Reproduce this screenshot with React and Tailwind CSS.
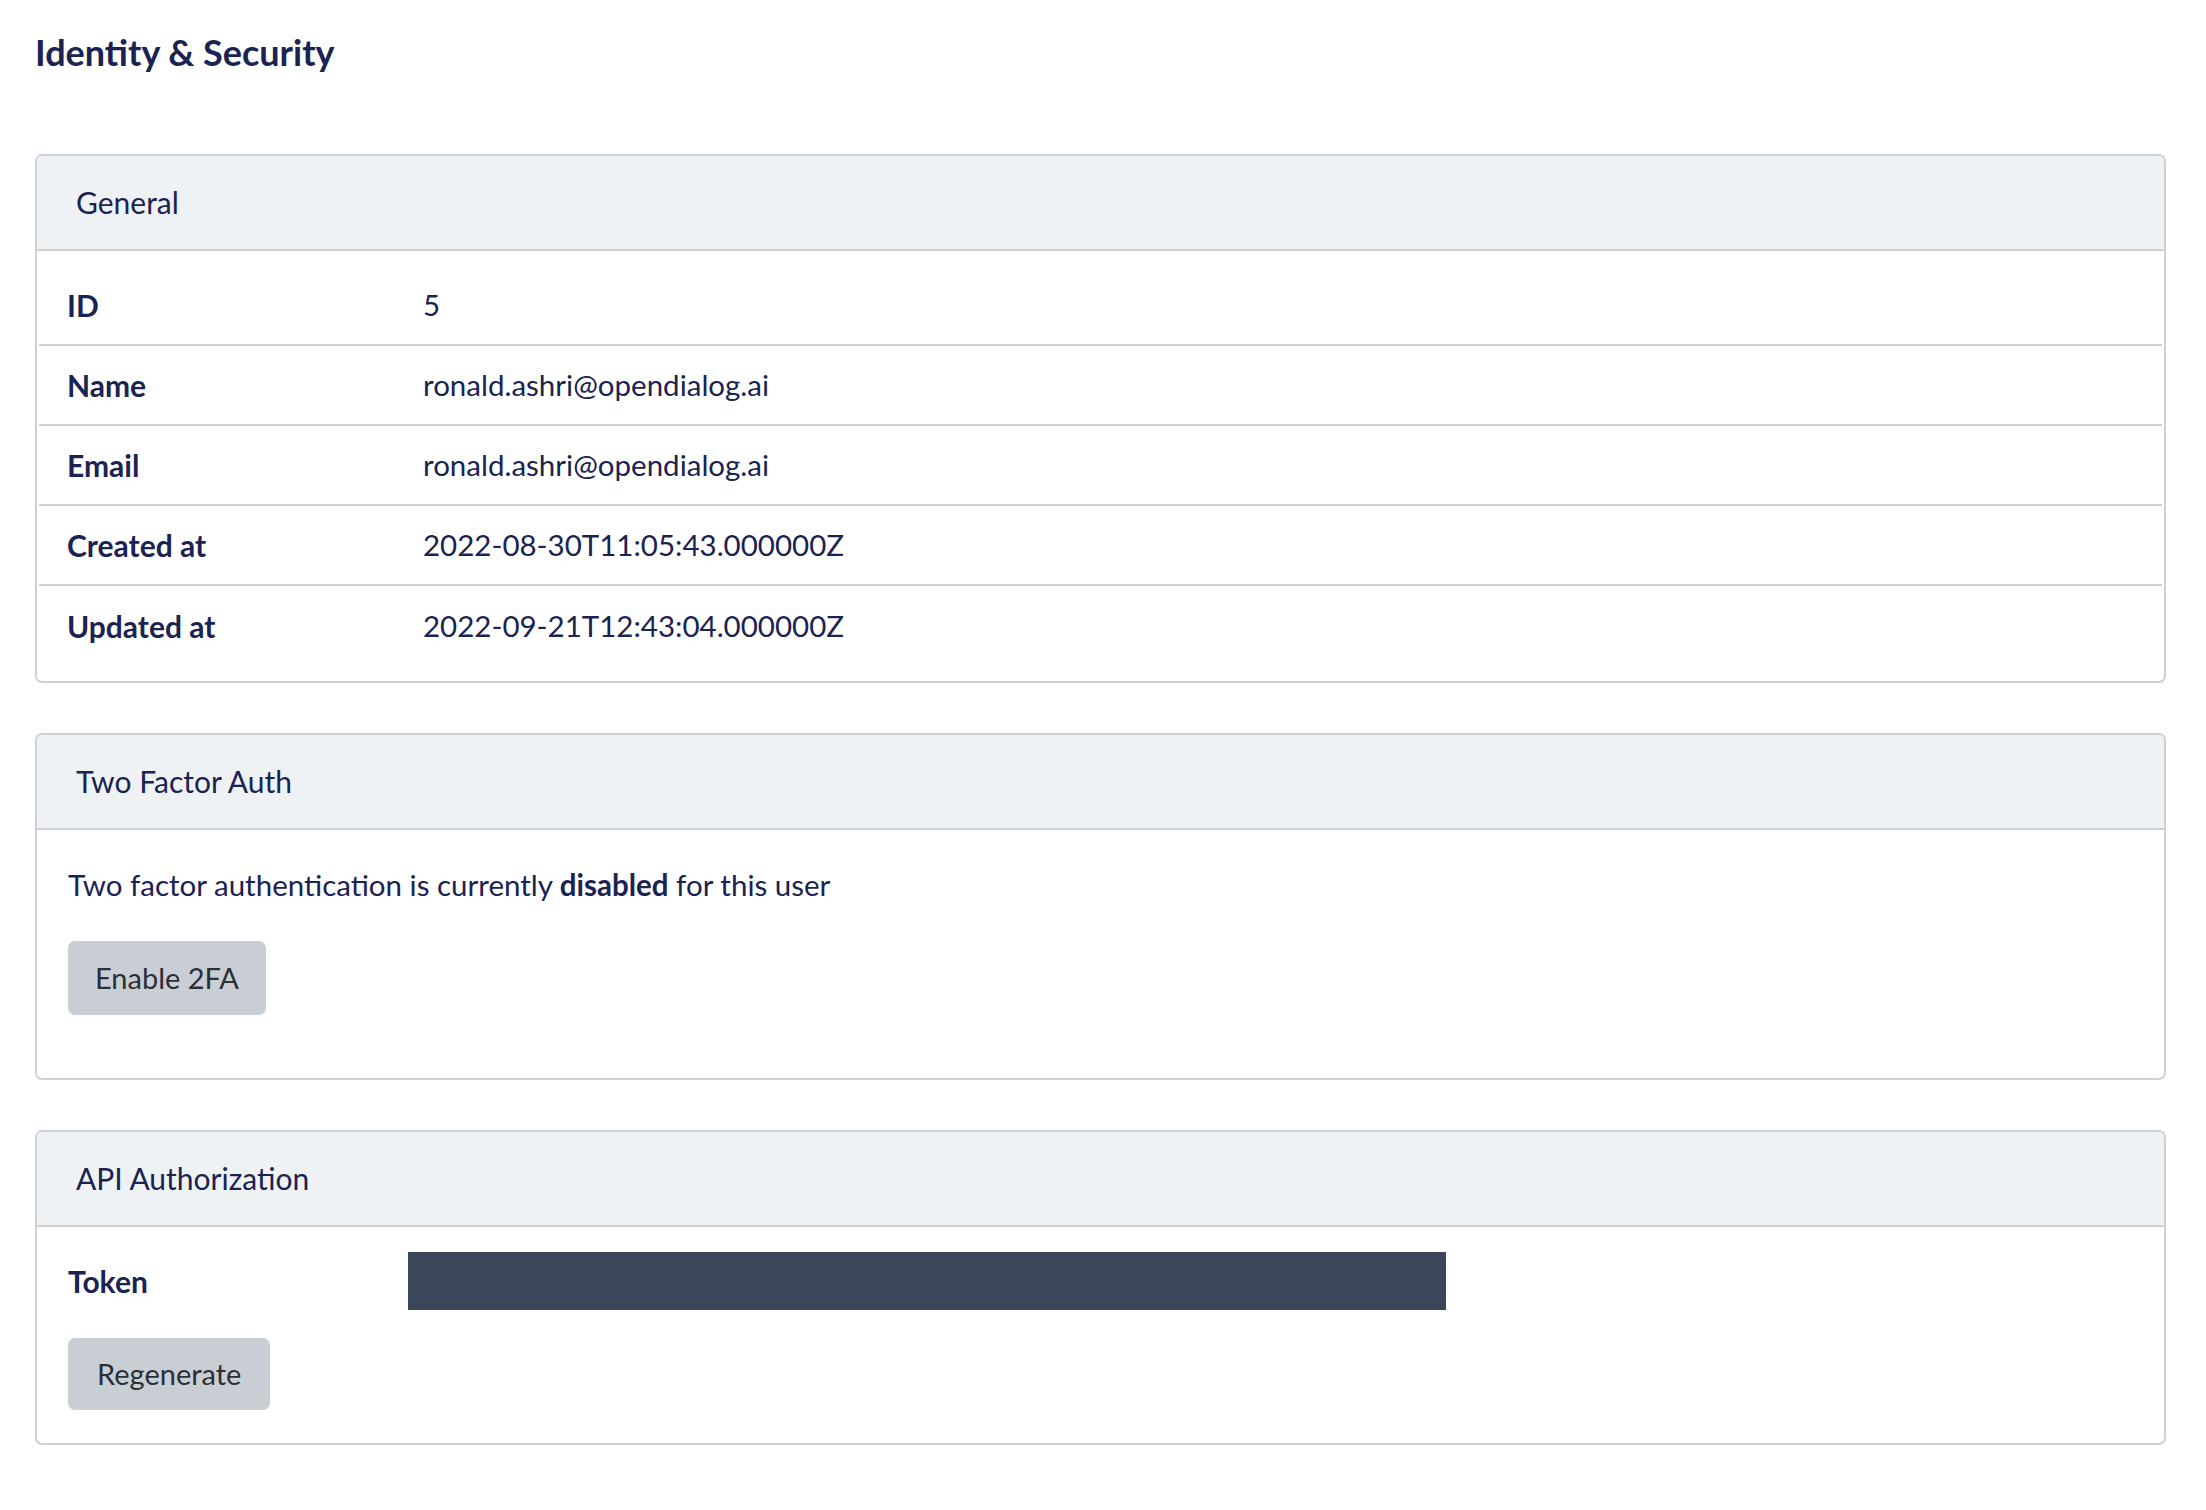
import React from 'react';

const rows = [
  { label: 'ID', value: '5' },
  { label: 'Name', value: 'ronald.ashri@opendialog.ai' },
  { label: 'Email', value: 'ronald.ashri@opendialog.ai' },
  { label: 'Created at', value: '2022-08-30T11:05:43.000000Z' },
  { label: 'Updated at', value: '2022-09-21T12:43:04.000000Z' },
];

const Card = ({ title, children }) => (
  <div className="border-2 border-[#cdd1d6] rounded-[7px] overflow-hidden">
    <div className="h-[95px] bg-[#eef2f5] border-b-2 border-[#cdd1d6] flex items-center px-[39px] text-[30px] text-[#1a2352]">
      {title}
    </div>
    {children}
  </div>
);

const App = () => {
  return (
    <div className="min-h-screen bg-white pl-[35px] pr-[40px] pt-[28px] text-[#1a2352] font-['Lato','Liberation_Sans',sans-serif]">
      {/* Header */}
      <h1 className="text-[36px] leading-[48px] font-bold mb-[78px]">Identity &amp; Security</h1>

      <div className="flex flex-col gap-[50px]">
        {/* General */}
        <Card title="General">
          <div className="pt-[15px] pb-[15px] px-[2px]">
            {rows.map((row, i) => (
              <div
                key={row.label}
                className={`flex items-center h-[80px] px-[28px] text-[29.5px] ${
                  i < rows.length - 1 ? 'border-b-2 border-[#cdd1d6]' : ''
                }`}
              >
                <div className="w-[356px] font-bold text-[30px]">{row.label}</div>
                <div>{row.value}</div>
              </div>
            ))}
          </div>
        </Card>

        {/* Two Factor Auth */}
        <Card title="Two Factor Auth">
          <div className="px-[31px] pt-[35px] pb-[31px]">
            <p className="text-[29.5px] leading-[40px]">
              Two factor authentication is currently <span className="font-bold">disabled</span> for this user
            </p>
            <button className="mt-[36px] mb-[32px] h-[74px] px-[27px] rounded-[7px] bg-[#c9ced4] text-[#2b2f36] text-[29px]">
              Enable 2FA
            </button>
          </div>
        </Card>

        {/* API Authorization */}
        <Card title="API Authorization">
          <div className="px-[31px] pt-[25px] pb-[33px]">
            <div className="flex items-center">
              <div className="w-[340px] text-[30px] font-bold">Token</div>
              <div className="w-[1038px] h-[58px] bg-[#3a4759]"></div>
            </div>
            <button className="mt-[28px] h-[72px] px-[29px] rounded-[7px] bg-[#c9ced4] text-[#2b2f36] text-[29px]">
              Regenerate
            </button>
          </div>
        </Card>
      </div>
    </div>
  );
};

export default App;
